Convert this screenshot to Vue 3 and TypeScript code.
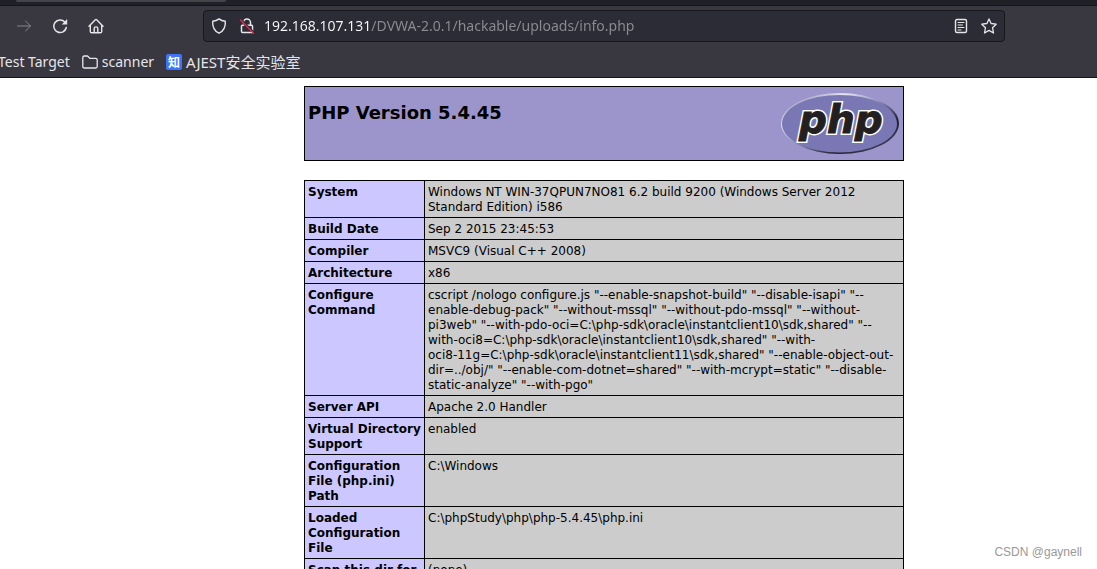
<script setup lang="ts">
import { ref } from 'vue'

interface InfoRow {
  label: string
  value: string[]
}

const address = ref('192.168.107.131/DVWA-2.0.1/hackable/uploads/info.php')

// Every odd part of a value is a word that stays on one line.
const rows: InfoRow[] = [
  { label: 'System', value: ['Windows NT WIN-37QPUN7NO81 6.2 build 9200 (Windows Server 2012 Standard Edition) i586'] },
  { label: 'Build Date', value: ['Sep 2 2015 23:45:53'] },
  { label: 'Compiler', value: ['MSVC9 (Visual C++ 2008)'] },
  { label: 'Architecture', value: ['x86'] },
  {
    label: 'Configure Command',
    value: [
      'cscript /nologo configure.js "--enable-snapshot-build" "--disable-isapi" "--enable-debug-pack" "--without-mssql" "--without-pdo-mssql" "--without-pi3web" "--with-pdo-oci=C:\\php-sdk\\oracle\\instantclient10\\sdk,shared" "--with-oci8=C:\\php-sdk\\oracle\\instantclient10\\sdk,shared" "--with-',
      'oci8-11g',
      '=C:\\php-sdk\\oracle\\instantclient11\\sdk,shared" "--enable-object-out-dir=../obj/" "--enable-com-dotnet=shared" "--with-mcrypt=static" "--disable-static-analyze" "--with-pgo"',
    ],
  },
  { label: 'Server API', value: ['Apache 2.0 Handler'] },
  { label: 'Virtual Directory Support', value: ['enabled'] },
  { label: 'Configuration File (php.ini) Path', value: ['C:\\Windows'] },
  { label: 'Loaded Configuration File', value: ['C:\\phpStudy\\php\\php-5.4.45\\php.ini'] },
  { label: 'Scan this dir for additional .ini files', value: ['(none)'] },
]
</script>

<template>
  <div class="window">
    <header class="chrome">
      <div class="tabs"><div class="tab"></div></div>
      <div class="toolbar">
        <nav class="nav">
          <button class="tool" type="button" aria-label="Forward" disabled>
            <svg width="16" height="16" viewBox="0 0 16 16"><path d="M1.500 8H14.500M9.500 3L14.500 8L9.500 13" /></svg>
          </button>
          <button class="tool" type="button" aria-label="Reload">
            <svg width="16" height="16" viewBox="0 0 16 16">
              <path d="M14.300 9.500A6.300 6.300 0 1 1 12.800 4" stroke-width="1.500" />
              <path d="M15.200 1V6.500H9.700Z" class="solid" />
            </svg>
          </button>
          <button class="tool" type="button" aria-label="Home">
            <svg width="16" height="16" viewBox="0 0 16 16">
              <path d="M1 8.200L7.300 1.700Q8 1 8.700 1.700L15 8.200M2.300 7.200V13.500Q2.300 14.800 3.600 14.800H12.400Q13.700 14.800 13.700 13.500V7.200M6.200 14.500V10.300Q6.200 8.900 8 8.900T9.800 10.300V14.500" stroke-width="1.400" />
            </svg>
          </button>
        </nav>
        <div class="urlbar">
          <button class="small" type="button" aria-label="Tracking protection">
            <svg width="16" height="16" viewBox="0 0 16 16"><path d="M8 .9C10 2.500 12 3 14.300 3.200C14.700 8.500 13 12.800 8 15.200C3 12.800 1.300 8.500 1.700 3.200C4 3 6 2.500 8 .9Z" stroke-width="1.400" /></svg>
          </button>
          <button class="small" type="button" aria-label="Connection is not secure">
            <svg width="16" height="16" viewBox="0 0 16 16">
              <path d="M4.500 5V4.500A3.500 3.500 0 0 1 11.500 4.500V7.200M8.500 7.200H12.700Q13.500 7.200 13.500 8V14.500H3.500Q2.500 14.500 2.500 13.500V8Q2.500 7.200 3.300 7.200H4.500" stroke-width="1.500" />
              <path d="M2.400 1.600L15.400 14.800" class="gap" />
              <path d="M1.500 2L14.500 15.200" class="slash" />
            </svg>
          </button>
          <input v-model="address" class="address" type="text" aria-label="Address" spellcheck="false" />
          <button class="small" type="button" aria-label="Reader view">
            <svg width="16" height="16" viewBox="0 0 16 16"><rect x="2.500" y="1.500" width="11" height="13" rx="1.500" stroke-width="1.400" /><path d="M5 4.500H11M5 7H9.500M5 9.500H11M5 12H8" /></svg>
          </button>
          <button class="small" type="button" aria-label="Bookmark this page">
            <svg width="16" height="16" viewBox="0 0 16 16"><path d="M8 .9L10.100 5.500L15.200 6.200L11.500 9.700L12.500 15L8 12.400L3.500 15L4.500 9.700L.8 6.200L5.900 5.500Z" stroke-width="1.300" /></svg>
          </button>
        </div>
      </div>
      <nav class="bookmarks">
        <button class="mark" type="button">Test Target</button>
        <button class="mark" type="button">
          <svg width="16" height="16" viewBox="0 0 16 16"><path d="M.8 12.500V3.500Q.8 2 2.300 2H5.500L7.800 4.300H13.700Q15.200 4.300 15.200 5.800V12.500Q15.200 14 13.700 14H2.300Q.8 14 .8 12.500Z" stroke-width="1.300" /></svg>
          scanner
        </button>
        <a class="mark site" href="#"><span class="zhi">知</span>AJEST安全实验室</a>
      </nav>
    </header>

    <main class="page">
      <div class="content">
        <div class="title">
          <h1>PHP Version 5.4.45</h1>
          <a href="#" aria-label="PHP home">
            <svg class="logo" width="120" height="67" viewBox="0 0 120 67">
              <defs>
                <linearGradient id="rim" x1="0" y1="0" x2="1" y2="1">
                  <stop offset="0" stop-color="#77779f" />
                  <stop offset=".28" stop-color="#e4e4f2" />
                  <stop offset=".5" stop-color="#8585b0" />
                  <stop offset=".72" stop-color="#202030" />
                  <stop offset="1" stop-color="#555577" />
                </linearGradient>
              </defs>
              <ellipse cx="60" cy="33.500" rx="59" ry="30.500" fill="url(#rim)" />
              <ellipse cx="59.500" cy="33.700" rx="57.500" ry="28.800" fill="#7a78b4" />
              <text x="19" y="43">php</text>
              <text x="19" y="43" class="ink">php</text>
            </svg>
          </a>
        </div>
        <table class="info">
          <tbody>
            <tr v-for="row in rows" :key="row.label">
              <th scope="row">{{ row.label }}</th>
              <td><span v-for="(part, i) in row.value" :key="i" :class="{ whole: i % 2 === 1 }">{{ part }}</span></td>
            </tr>
          </tbody>
        </table>
      </div>
    </main>
    <div class="credit">CSDN @gaynell</div>
  </div>
</template>

<style>
body {
  margin: 0;
}
</style>

<style scoped>
.window {
  position: relative;
  display: flex;
  flex-direction: column;
  height: 100vh;
  overflow: hidden;
  background: #fff;
}

.chrome {
  flex: none;
  border-bottom: 1px solid #121217;
  background: #393840;
  color: #e6e6ea;
  font: 14px/20px "Noto Sans", "Noto Sans CJK SC", sans-serif;
}

.tabs {
  height: 5px;
  border-bottom: 1px solid #15151a;
  background: #202127;
}

.tab {
  width: 210px;
  height: 2px;
  margin-left: 16px;
  border-radius: 0 0 3px 3px;
  background: #45444d;
}

button {
  padding: 0;
  border: 0;
  background: none;
  color: inherit;
  font: inherit;
}

svg {
  display: block;
  flex: none;
  fill: none;
  stroke: currentColor;
  stroke-linecap: round;
  stroke-linejoin: round;
}

.toolbar {
  display: flex;
  align-items: center;
  height: 40px;
  padding-right: 92px;
}

.nav {
  display: flex;
  gap: 20px;
  width: 187px;
  padding-left: 16px;
}

.tool:disabled {
  color: #85848b;
}

.solid {
  fill: currentColor;
  stroke: none;
}

.urlbar {
  display: flex;
  flex: 1;
  align-items: center;
  gap: 12px;
  box-sizing: border-box;
  height: 32px;
  padding: 0 7px;
  border: 1px solid #16161b;
  border-radius: 4px;
  background: #2b2c35;
}

.gap {
  stroke: #2b2c35;
  stroke-width: 1.5;
}

.slash {
  stroke: #e22850;
  stroke-width: 1.4;
}

.address {
  flex: 1;
  min-width: 0;
  height: 24px;
  margin-left: -3px;
  padding: 0;
  border: 0;
  outline: 0;
  background: linear-gradient(90deg, #fbfbfe 107px, #8d8c93 107px);
  background-clip: text;
  color: transparent;
  font: 14px/24px "Noto Sans", sans-serif;
}

.bookmarks {
  display: flex;
  align-items: center;
  gap: 12px;
  height: 31px;
  margin-left: -2px;
}

.mark {
  display: flex;
  align-items: center;
  gap: 4px;
  color: inherit;
  text-decoration: none;
  white-space: nowrap;
}

.site {
  font-size: 15px;
}

.zhi {
  width: 16px;
  height: 16px;
  border-radius: 2px;
  background: #3e74fb;
  color: #fff;
  font: bold 12px/16px "Noto Sans CJK SC", sans-serif;
  text-align: center;
}

.page {
  flex: 1;
  min-height: 0;
  padding: 8px 0 0 111px;
  color: #000;
  font: 12px/15px "DejaVu Sans", sans-serif;
}

.content {
  width: 600px;
  margin: 0 auto;
}

.title {
  display: flex;
  justify-content: space-between;
  box-sizing: border-box;
  height: 75px;
  padding: 3px;
  border: 1px solid #000;
  background: #9b95cc;
}

h1 {
  margin: 12px 0 0;
  font-size: 18px;
  line-height: 22px;
}

.logo {
  stroke: none;
}

.logo text {
  fill: #231f20;
  stroke: #fff;
  stroke-width: 4px;
  stroke-linejoin: miter;
  font: italic bold 39px "DejaVu Sans", sans-serif;
}

.logo .ink {
  stroke: #231f20;
  stroke-width: 1px;
}

.info {
  width: 100%;
  margin-top: 19px;
  border-collapse: collapse;
}

.info th,
.info td {
  padding: 4px 3px 2px;
  border: 1px solid #000;
  text-align: left;
  vertical-align: top;
}

.info th {
  width: 113px;
  background: #ccc8ff;
}

.info td {
  background: #cccccc;
}

.whole {
  white-space: nowrap;
}

.credit {
  position: absolute;
  right: 15px;
  bottom: 9px;
  color: #999;
  font: 12px/16px "Liberation Sans", sans-serif;
}
</style>
